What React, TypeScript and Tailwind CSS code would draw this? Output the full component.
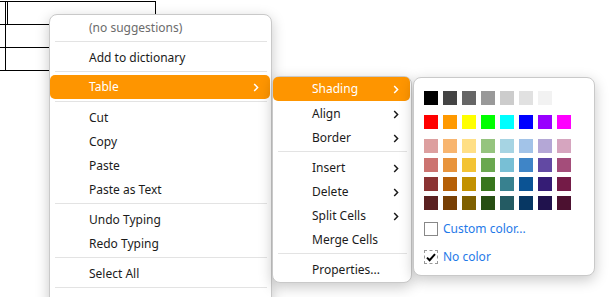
import React from "react";

const font = { fontFamily: '"Noto Sans", "Open Sans", sans-serif' };

function Chevron({ white }: { white?: boolean }) {
  return (
    <svg width="6" height="9" viewBox="0 0 6 9" className="block">
      <path d="M1.2 1 L4.6 4.5 L1.2 8" fill="none" stroke={white ? "#ffffff" : "#1a1a1a"} strokeWidth="1.5" />
    </svg>
  );
}

type Item = { label?: string; sep?: boolean; sub?: boolean; active?: boolean; muted?: boolean; blank?: boolean };

function Menu({ items, textPad, chevRight }: { items: Item[]; textPad: string; chevRight: string }) {
  return (
    <div className="flex flex-col pt-px">
      {items.map((it, i) => {
        if (it.sep)
          return (
            <div key={i} className="h-[6px] pt-px">
              <div className="h-px bg-[#e3e3e3] ml-[5px] mr-[4px]" />
            </div>
          );
        if (it.blank) return <div key={i} className="h-[24px]" />;
        return (
          <div
            key={i}
            className={
              "flex h-[24px] items-center justify-between mr-[1px] rounded-[5px] " +
              textPad +
              " " +
              chevRight +
              (it.active ? " -mt-px mb-px bg-[#fe9500] text-white" : it.muted ? " text-[#6b6b6b]" : " text-[#1b1b1b]")
            }
          >
            <span className="text-[12px] leading-none">{it.label}</span>
            {it.sub ? <Chevron white={it.active} /> : null}
          </div>
        );
      })}
    </div>
  );
}

const row1 = ["#000000", "#444444", "#666666", "#999999", "#cccccc", "#e1e1e1", "#f2f2f2"];
const row2 = ["#ff0000", "#ff9900", "#ffff00", "#00ff00", "#00ffff", "#0000ff", "#9900ff", "#ff00ff"];
const grid = [
  ["#dd9f9f", "#f8b56f", "#ffdf85", "#95c47e", "#a6d4e3", "#a2c3e8", "#b4a7d6", "#d6a5bf"],
  ["#cc7370", "#e8943c", "#f3c333", "#6aa84f", "#78bfd5", "#3f85c7", "#6249a3", "#a44d7a"],
  ["#8b3333", "#b55f07", "#c29100", "#38761d", "#38818f", "#0b5394", "#351c75", "#741b47"],
  ["#5b2121", "#783f04", "#7f6000", "#274e13", "#245b63", "#073763", "#20124d", "#4c1130"],
];

function Swatches({ colors }: { colors: string[] }) {
  return (
    <div className="flex gap-[5px]">
      {colors.map((c, i) => (
        <div key={i} className="w-[14px] h-[14px]" style={{ backgroundColor: c }} />
      ))}
    </div>
  );
}

export default function App() {
  const m1: Item[] = [
    { label: "(no suggestions)", muted: true },
    { sep: true },
    { label: "Add to dictionary" },
    { sep: true },
    { label: "Table", sub: true, active: true },
    { sep: true },
    { label: "Cut" },
    { label: "Copy" },
    { label: "Paste" },
    { label: "Paste as Text" },
    { sep: true },
    { label: "Undo Typing" },
    { label: "Redo Typing" },
    { sep: true },
    { label: "Select All" },
    { sep: true },
    { blank: true },
  ];
  const m2: Item[] = [
    { label: "Shading", sub: true, active: true },
    { label: "Align", sub: true },
    { label: "Border", sub: true },
    { sep: true },
    { label: "Insert", sub: true },
    { label: "Delete", sub: true },
    { label: "Split Cells", sub: true },
    { label: "Merge Cells" },
    { sep: true },
    { label: "Properties..." },
  ];
  return (
    <div className="relative w-[616px] h-[297px] overflow-hidden bg-white" style={font}>
      {/* document table */}
      <div className="mt-px w-[156px] border-t border-black">
        <div className="flex h-[23px] border-b border-black">
          <div className="w-[6px] border-r border-black" />
          <div className="w-[2px] border-r border-black" />
          <div className="flex-1 border-r border-black" />
        </div>
        <div className="flex h-[23px] border-b border-black">
          <div className="w-[6px] border-r border-black" />
          <div className="flex-1 border-r border-black" />
        </div>
        <div className="flex h-[23px] border-b border-black">
          <div className="w-[6px] border-r border-black" />
          <div className="flex-1 border-r border-black" />
        </div>
      </div>

      {/* main context menu */}
      <div className="absolute left-[49px] top-[14px] w-[223px] h-[320px] bg-white border border-[#c9c9c9] rounded-[8px] shadow-[0_4px_14px_rgba(0,0,0,0.22)]">
        <Menu items={m1} textPad="pl-[39px]" chevRight="pr-[11px]" />
      </div>

      {/* table submenu */}
      <div className="absolute left-[272px] top-[76px] w-[140px] h-[207px] bg-white border border-[#c9c9c9] rounded-[8px] shadow-[0_4px_14px_rgba(0,0,0,0.22)]">
        <Menu items={m2} textPad="pl-[39px]" chevRight="pr-[11px]" />
      </div>

      {/* shading palette */}
      <div className="absolute left-[413px] top-[77px] w-[182px] h-[199px] bg-white border border-[#c9c9c9] rounded-[8px] shadow-[0_4px_14px_rgba(0,0,0,0.22)] pl-[10px] pt-[13px]">
        <Swatches colors={row1} />
        <div className="mt-[10px]">
          <Swatches colors={row2} />
        </div>
        <div className="mt-[10px] flex flex-col gap-[5px]">
          {grid.map((r, i) => (
            <Swatches key={i} colors={r} />
          ))}
        </div>
        <div className="mt-[12px] flex items-center h-[14px]">
          <div className="w-[14px] h-[14px] border-[1.5px] border-[#888888]" />
          <span className="ml-[5px] text-[12px] leading-none text-[#1f7ae8]">Custom color...</span>
        </div>
        <div className="mt-[14px] flex items-center h-[14px]">
          <div className="w-[14px] h-[14px] border border-dashed border-[#9a9a9a] flex items-center justify-center">
            <svg width="10" height="9" viewBox="0 0 10 9">
              <path d="M1 4.6 L3.6 7.2 L9 1.2" fill="none" stroke="#000" strokeWidth="2" />
            </svg>
          </div>
          <span className="ml-[5px] text-[12px] leading-none text-[#1f7ae8]">No color</span>
        </div>
      </div>
    </div>
  );
}
